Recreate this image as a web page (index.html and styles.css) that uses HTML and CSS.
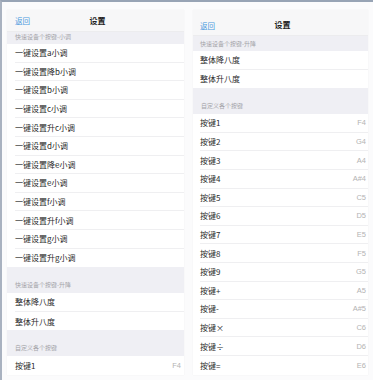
FILE: index.html
```html
<!DOCTYPE html>
<html lang="zh-CN">
<head>
    <meta charset="UTF-8">
    <meta name="viewport" content="width=device-width, initial-scale=1.0">
    <title>设置</title>
    <link rel="stylesheet" href="styles.css">
</head>
<body>
    <div class="screens">
        <!-- 左边: 小调设置 -->
        <div class="screen screen-left">
            <div class="navbar">
                <span class="back">返回</span>
                <span class="title">设置</span>
            </div>
            <div class="section-head short">快速设备个按键-小调</div>
            <div class="row">一键设置a小调</div>
            <div class="row">一键设置降b小调</div>
            <div class="row">一键设置b小调</div>
            <div class="row">一键设置c小调</div>
            <div class="row">一键设置升c小调</div>
            <div class="row">一键设置d小调</div>
            <div class="row">一键设置降e小调</div>
            <div class="row">一键设置e小调</div>
            <div class="row">一键设置f小调</div>
            <div class="row">一键设置升f小调</div>
            <div class="row">一键设置g小调</div>
            <div class="row last">一键设置升g小调</div>
            <div class="section-head">快速设备个按键-升降</div>
            <div class="row">整体降八度</div>
            <div class="row last">整体升八度</div>
            <div class="section-head">自定义各个按键</div>
            <div class="row last">按键1<span class="value">F4</span></div>
        </div>

        <!-- 右边: 自定义按键 -->
        <div class="screen screen-right">
            <div class="navbar tall">
                <span class="back">返回</span>
                <span class="title">设置</span>
            </div>
            <div class="section-head mid">快速设备个按键-升降</div>
            <div class="row">整体降八度</div>
            <div class="row last">整体升八度</div>
            <div class="section-head">自定义各个按键</div>
            <div class="row">按键1<span class="value">F4</span></div>
            <div class="row">按键2<span class="value">G4</span></div>
            <div class="row">按键3<span class="value">A4</span></div>
            <div class="row">按键4<span class="value">A#4</span></div>
            <div class="row">按键5<span class="value">C5</span></div>
            <div class="row">按键6<span class="value">D5</span></div>
            <div class="row">按键7<span class="value">E5</span></div>
            <div class="row">按键8<span class="value">F5</span></div>
            <div class="row">按键9<span class="value">G5</span></div>
            <div class="row">按键+<span class="value">A5</span></div>
            <div class="row">按键-<span class="value">A#5</span></div>
            <div class="row">按键×<span class="value">C6</span></div>
            <div class="row">按键÷<span class="value">D6</span></div>
            <div class="row last">按键=<span class="value">E6</span></div>
        </div>
    </div>
</body>
</html>
```

FILE: styles.css
```css
html, body {
    height: 100%;
}

body {
    margin: 0;
    font-family: "Noto Sans CJK SC", "Noto Sans", sans-serif;
    background: #fbfbfc;
    border-top: 2px solid #98a4b5;
    border-left: 2px solid #a9b2c0;
    box-sizing: border-box;
    overflow: hidden;
}

.screens {
    display: flex;
    gap: 9px;
    padding: 8px 5px 0 5px;
}

.screen {
    background: #fff;
    box-shadow: 0 0 1px rgba(0, 0, 0, 0.08);
}

.screen-left {
    width: 177px;
}

.screen-right {
    width: 175px;
}

.navbar {
    position: relative;
    height: 22px;
    background: #f7f7f8;
    display: flex;
    align-items: center;
    justify-content: center;
    border-bottom: 1px solid #ececee;
    box-sizing: border-box;
}

.navbar.tall {
    height: 26px;
    padding-top: 4px;
}

.back {
    position: absolute;
    left: 8px;
    font-size: 7.5px;
    color: #4a9ade;
}

.navbar.tall .back {
    left: 7px;
    top: 10px;
}

.title {
    font-size: 8px;
    font-weight: bold;
    color: #222;
    margin-left: 4px;
}

.section-head {
    height: 26px;
    background: #efeff4;
    color: #a3a3a8;
    font-size: 6px;
    padding: 0 8px 4px;
    box-sizing: border-box;
    display: flex;
    align-items: flex-end;
}

.section-head.short {
    height: 12px;
    padding-bottom: 3px;
}

.section-head.mid {
    height: 15px;
    padding-left: 7px;
    padding-bottom: 3px;
}

.row {
    height: 18.6px;
    margin-left: 8px;
    padding-right: 3px;
    box-sizing: border-box;
    border-bottom: 1px solid #efeff1;
    display: flex;
    align-items: center;
    justify-content: space-between;
    font-size: 8px;
    color: #2a2a2a;
}

.screen-right .row {
    margin-left: 7px;
    padding-right: 2px;
}

.row.last {
    border-bottom: none;
}

.value {
    font-family: "Liberation Sans", sans-serif;
    font-size: 7.5px;
    color: #b3b3b3;
}
```
